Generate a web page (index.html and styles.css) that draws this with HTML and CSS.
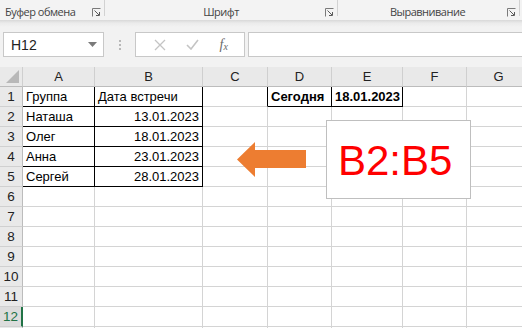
FILE: index.html
```html
<!DOCTYPE html>
<html>
<head>
<meta charset="utf-8">
<link rel="stylesheet" href="styles.css">
</head>
<body>
<div class="app">
  <div class="ribbon">
    <div class="grp g1"><span class="glabel">Буфер обмена</span><svg class="launch" width="9" height="9" viewBox="0 0 9 9"><path d="M0.5 8.5V0.5H8.5" fill="none" stroke="#7a7a7a"/><path d="M2.5 2.5L7 7M4 7.5H7.5V4" fill="none" stroke="#5a5a5a"/></svg></div>
    <div class="grp g2"><span class="glabel">Шрифт</span><svg class="launch" width="9" height="9" viewBox="0 0 9 9"><path d="M0.5 8.5V0.5H8.5" fill="none" stroke="#7a7a7a"/><path d="M2.5 2.5L7 7M4 7.5H7.5V4" fill="none" stroke="#5a5a5a"/></svg></div>
    <div class="grp g3"><span class="glabel">Выравнивание</span><svg class="launch" width="9" height="9" viewBox="0 0 9 9"><path d="M0.5 8.5V0.5H8.5" fill="none" stroke="#7a7a7a"/><path d="M2.5 2.5L7 7M4 7.5H7.5V4" fill="none" stroke="#5a5a5a"/></svg></div>
  </div>
  <div class="fbar">
    <div class="namebox"><span>H12</span><svg width="9" height="5" viewBox="0 0 9 5"><path d="M0 0H9L4.5 5Z" fill="#7a7a7a"/></svg></div>
    <div class="dots"><i></i><i></i><i></i></div>
    <div class="fbtns">
      <svg width="12" height="12" viewBox="0 0 12 12"><path d="M1 1L11 11M11 1L1 11" stroke="#c4c4c4" stroke-width="1.3"/></svg>
      <svg width="13" height="11" viewBox="0 0 13 11"><path d="M1 6L5 10L12 1" fill="none" stroke="#c4c4c4" stroke-width="1.6"/></svg>
      <span class="fx">f<sub>x</sub></span>
    </div>
    <div class="finput"></div>
  </div>
  <table class="sheet">
    <colgroup><col class="c-rh"><col class="c-a"><col class="c-b"><col class="c-c"><col class="c-d"><col class="c-e"><col class="c-f"><col class="c-g"></colgroup>
    <tr class="hdr"><th class="corner"><span class="tri"></span></th><th class="bk-b">A</th><th class="bk-b">B</th><th>C</th><th class="bk-b">D</th><th class="bk-b">E</th><th>F</th><th>G</th></tr>
    <tr><th class="rh bk-r">1</th><td class="bk-r bk-b">Группа</td><td class="bk-r bk-b">Дата встречи</td><td class="bk-r"></td><td class="bk-r bk-b b">Сегодня</td><td class="bk-r bk-b b num">18.01.2023</td><td></td><td></td></tr>
    <tr><th class="rh bk-r">2</th><td class="bk-r bk-b">Наташа</td><td class="bk-r bk-b num">13.01.2023</td><td></td><td></td><td></td><td></td><td></td></tr>
    <tr><th class="rh bk-r">3</th><td class="bk-r bk-b">Олег</td><td class="bk-r bk-b num">18.01.2023</td><td></td><td></td><td></td><td></td><td></td></tr>
    <tr><th class="rh bk-r">4</th><td class="bk-r bk-b">Анна</td><td class="bk-r bk-b num">23.01.2023</td><td></td><td></td><td></td><td></td><td></td></tr>
    <tr><th class="rh bk-r">5</th><td class="bk-r bk-b">Сергей</td><td class="bk-r bk-b num">28.01.2023</td><td></td><td></td><td></td><td></td><td></td></tr>
    <tr><th class="rh">6</th><td></td><td></td><td></td><td></td><td></td><td></td><td></td></tr>
    <tr><th class="rh">7</th><td></td><td></td><td></td><td></td><td></td><td></td><td></td></tr>
    <tr><th class="rh">8</th><td></td><td></td><td></td><td></td><td></td><td></td><td></td></tr>
    <tr><th class="rh">9</th><td></td><td></td><td></td><td></td><td></td><td></td><td></td></tr>
    <tr><th class="rh">10</th><td></td><td></td><td></td><td></td><td></td><td></td><td></td></tr>
    <tr><th class="rh">11</th><td></td><td></td><td></td><td></td><td></td><td></td><td></td></tr>
    <tr><th class="rh sel">12</th><td></td><td></td><td></td><td></td><td></td><td></td><td></td></tr>
    <tr><th class="rh"></th><td></td><td></td><td></td><td></td><td></td><td></td><td></td></tr>
  </table>
  <svg class="arrow" width="70" height="36" viewBox="0 0 70 36"><path d="M0 17.5L18 0V8H69V26H18V35Z" fill="#ed7d31"/></svg>
  <div class="callout">B2:B5</div>
</div>
</body>
</html>
```
FILE: styles.css
```css
html, body { margin: 0; padding: 0; }
body { width: 522px; height: 328px; overflow: hidden; background: #fff; font-family: "Liberation Sans", Arial, sans-serif; }
.app { position: relative; width: 522px; height: 328px; overflow: hidden; }

.ribbon { display: flex; height: 20px; background: #f3f3f3; }
.grp { position: relative; height: 16px; border-right: 1px solid #d2d2d2; display: flex; align-items: center; justify-content: center; }
.glabel { font-family: "Open Sans", "Noto Sans", sans-serif; font-size: 11px; letter-spacing: -0.5px; color: #444; padding-top: 7px; }
.launch { position: absolute; right: 3px; top: 8px; }
.g1 { width: 104px; justify-content: flex-start; }
.g1 .glabel { padding-left: 5px; }
.g2 { width: 232px; }
.g3 { width: 181px; }
.g3 .glabel { padding-right: 2px; }

.fbar { height: 47px; background: linear-gradient(#d8d8d8 0, #ebebeb 3px, #f2f2f2 7px, #f2f2f2 100%); display: flex; align-items: flex-start; padding-top: 12px; box-sizing: border-box; }
.namebox { margin-left: 3px; width: 101px; height: 25px; box-sizing: border-box; border: 1px solid #c8c8c8; background: #fff; display: flex; align-items: center; justify-content: space-between; padding: 0 6px 0 7px; font-size: 14px; color: #222; }
.dots { width: 31px; height: 25px; display: flex; flex-direction: column; align-items: center; justify-content: center; gap: 2px; }
.dots i { width: 2px; height: 2px; background: #b8b8b8; display: block; }
.fbtns { width: 110px; height: 25px; box-sizing: border-box; border: 1px solid #c8c8c8; background: #fff; display: flex; align-items: center; justify-content: space-around; padding: 0 6px 0 8px; }
.fx { font-family: "Liberation Serif", serif; font-style: italic; font-size: 14px; color: #6a6a6a; line-height: 1; }
.fx sub { font-size: 10px; vertical-align: -1px; }
.finput { margin-left: 3px; flex: 1; height: 25px; box-sizing: border-box; border: 1px solid #c8c8c8; border-right: none; background: #fff; }

.sheet { border-collapse: separate; border-spacing: 0; table-layout: fixed; width: 531px; background: #fff; }
.c-rh { width: 23px; } .c-a { width: 72px; } .c-b { width: 108px; } .c-c { width: 65px; }
.c-d { width: 64px; } .c-e { width: 71px; } .c-f { width: 64px; } .c-g { width: 64px; }
.sheet td, .sheet th { box-sizing: border-box; padding: 0 3px; height: 20px; border-right: 1px solid #d4d4d4; border-bottom: 1px solid #d4d4d4; font-size: 13px; color: #000; white-space: nowrap; overflow: hidden; font-weight: normal; line-height: 18px; }
.sheet .hdr th { height: 19px; background: #e9e9e9; text-align: center; color: #222; border-right-color: #cfcfcf; border-bottom-color: #bcbcbc; padding-top: 1px; }
.sheet th.corner { position: relative; padding: 0; }
.tri { position: absolute; right: 3px; bottom: 3px; width: 0; height: 0; border-left: 13px solid transparent; border-bottom: 13px solid #b8b8b8; }
.sheet th.rh { background: #e9e9e9; text-align: center; color: #222; padding: 0; border-right-color: #bcbcbc; border-bottom-color: #d0d0d0; font-size: 13.5px; }
.sheet th.sel { background: #dcdcdc; color: #217346; border-right: 2px solid #217346; }
.sheet .bk-r { border-right-color: #000; }
.sheet .bk-b { border-bottom-color: #000; }
.sheet .b { font-weight: bold; }
.sheet .num { text-align: right; }

.arrow { position: absolute; left: 237px; top: 142px; }
.callout { position: absolute; left: 326px; top: 120px; width: 145px; height: 79px; box-sizing: border-box; border: 1px solid #bfbfbf; background: #fff; color: #ff0000; font-size: 42px; line-height: 1; display: flex; align-items: center; padding: 2px 0 0 11px; }
```
